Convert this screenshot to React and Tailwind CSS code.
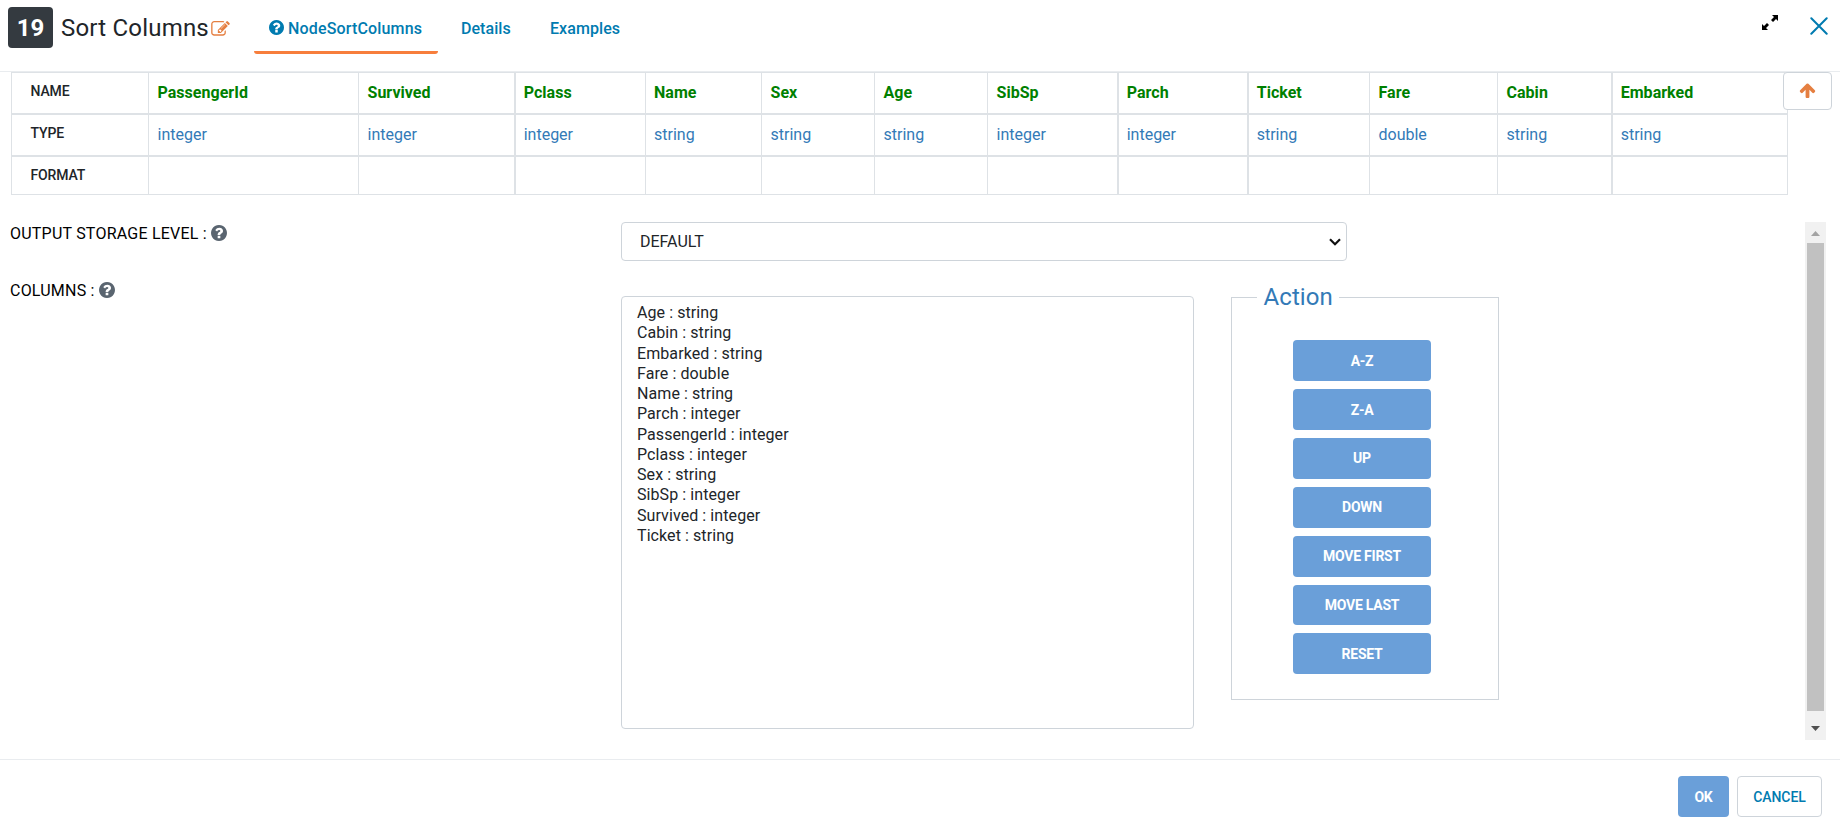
const COLS = [
  { name: 'PassengerId', type: 'integer', edge: 'border-l pl-[8.5px]' },
  { name: 'Survived', type: 'integer', edge: 'border-l pl-[8.5px]' },
  { name: 'Pclass', type: 'integer', edge: 'border-l-2 pl-[7.7px]' },
  { name: 'Name', type: 'string', edge: 'border-l pl-2' },
  { name: 'Sex', type: 'string', edge: 'border-l pl-[8.5px]' },
  { name: 'Age', type: 'string', edge: 'border-l pl-[8.5px]' },
  { name: 'SibSp', type: 'integer', edge: 'border-l pl-[8.5px]' },
  { name: 'Parch', type: 'integer', edge: 'border-l-2 pl-[7.7px]' },
  { name: 'Ticket', type: 'string', edge: 'border-l-2 pl-[7.7px]' },
  { name: 'Fare', type: 'double', edge: 'border-l pl-[8.5px]' },
  { name: 'Cabin', type: 'string', edge: 'border-l pl-[8.5px]' },
  { name: 'Embarked', type: 'string', edge: 'border-l-2 pl-[7.7px]' },
]

const OPTIONS = [
  'Age : string',
  'Cabin : string',
  'Embarked : string',
  'Fare : double',
  'Name : string',
  'Parch : integer',
  'PassengerId : integer',
  'Pclass : integer',
  'Sex : string',
  'SibSp : integer',
  'Survived : integer',
  'Ticket : string',
]

const ACTIONS = ['A-Z', 'Z-A', 'UP', 'DOWN', 'MOVE FIRST', 'MOVE LAST', 'RESET']

const GRID =
  'grid grid-cols-[137px_210px_156px_131px_116px_113px_113px_130px_130px_122px_128px_114px_177px] border-r border-[#dee2e6]'

const ROW_HEAD = 'border-l border-[#dee2e6] pt-1.5 pl-[18.5px] text-sm leading-6 font-medium tracking-[-0.15px] text-[#212529]'

function Question({ className }) {
  return (
    <svg viewBox="128 128 1536 1536" fill="currentColor" className={className}>
      <path d="M1024 1376v-192q0-14-9-23t-23-9h-192q-14 0-23 9t-9 23v192q0 14 9 23t23 9h192q14 0 23-9t9-23zm256-672q0-88-55.5-163t-138.5-116-170-41q-243 0-371 213-15 24 8 42l132 100q7 6 19 6 16 0 25-12 53-68 86-92 34-24 86-24 48 0 85.5 26t37.5 59q0 38-20 61t-68 45q-63 28-115.5 86.5t-52.5 125.5v36q0 14 9 23t23 9h192q14 0 23-9t9-23q0-19 21.5-49.5t54.5-49.5q32-18 49-28.5t46-35 44.5-48 28-60.5 12.5-81zm384 192q0 209-103 385.5t-279.5 279.5-385.5 103-385.5-103-279.5-279.5-103-385.5 103-385.5 279.5-279.5 385.5-103 385.5 103 279.5 279.5 103 385.5z" />
    </svg>
  )
}

function Header() {
  return (
    <header className="flex h-[72px] items-start border-b border-[#e9ecef] pl-2">
      <div className="mt-[7px] flex h-[41px] w-[45px] items-center justify-center rounded-[4px] bg-[#343a40] text-2xl font-bold text-white">
        19
      </div>
      <h1 className="mt-[10px] ml-2 w-[150px] text-2xl leading-9 tracking-[0.2px] whitespace-nowrap text-[#212529]">Sort Columns</h1>
      <svg viewBox="0 128 1792 1536" fill="#e57f41" className="mt-[21px] h-4 w-[19px]">
        <path d="M888 1184l116-116-152-152-116 116v56h96v96h56zm440-720q-16-16-33 1l-350 350q-17 17-1 33t33-1l350-350q17-17 1-33zm80 594v190q0 119-84.5 203.5t-203.5 84.5h-832q-119 0-203.5-84.5t-84.5-203.5v-832q0-119 84.5-203.5t203.5-84.5h832q63 0 117 25 15 7 18 23 3 17-9 29l-49 49q-14 14-32 8-23-6-45-6h-832q-66 0-113 47t-47 113v832q0 66 47 113t113 47h832q66 0 113-47t47-113v-126q0-13 9-22l64-64q15-15 35-7t20 29zm-96-738l288 288-672 672h-288v-288zm444 132l-92 92-288-288 92-92q28-28 68-28t68 28l152 152q28 28 28 68t-28 68z" />
      </svg>
      <nav className="ml-6 flex text-base leading-6 font-medium tracking-[0.16px] text-[#007bb0]">
        <a className="flex h-[54px] w-[184px] items-start rounded-[3px] border-b-3 border-[#f77e3c] pt-[17px] pl-[15px]">
          <Question className="mt-[3px] mr-1 h-[15px] w-[15px]" />
          NodeSortColumns
        </a>
        <a className="w-[112px] pt-[17px] pl-[23px] tracking-[0.05px]">Details</a>
        <a className="pt-[17px] tracking-[0.07px]">Examples</a>
      </nav>
      <svg viewBox="0 0 16 15" className="mt-[15px] ml-auto h-[15px] w-4">
        <path d="M10 0h6v6l-2-2-3 3-2-2 3-3zM0 15V9l2 2 3-3 2 2-3 3 2 2z" />
      </svg>
      <svg viewBox="0 0 18 18" stroke="#007bb0" strokeWidth="2" strokeLinecap="round" className="mt-[17px] mr-3 ml-8 h-[18px] w-[18px]">
        <path d="M1.3 1.3l15.4 15.4M16.7 1.3L1.3 16.7" />
      </svg>
    </header>
  )
}

function Schema() {
  return (
    <section className="flex h-[123px] items-start pl-[11px]">
      <div className="w-[1777px]">
        <div className={GRID + ' h-[43px] border-t border-b-2'}>
          <div className={ROW_HEAD}>NAME</div>
          {COLS.map((c) => (
            <div key={c.name} className={c.edge + ' border-[#dee2e6] pt-2'}>
              <div className="text-base leading-6 font-bold tracking-[0.03px] text-[#008000]">{c.name}</div>
            </div>
          ))}
        </div>
        <div className={GRID + ' h-[42px] border-b-2'}>
          <div className={ROW_HEAD}>TYPE</div>
          {COLS.map((c) => (
            <div key={c.name} className={c.edge + ' border-[#dee2e6] pt-2'}>
              <div className="text-base leading-6 text-[#337ab7]">{c.type}</div>
            </div>
          ))}
        </div>
        <div className={GRID + ' h-[38px] border-b'}>
          <div className={ROW_HEAD}>FORMAT</div>
          {COLS.map((c) => (
            <div key={c.name} className={c.edge + ' border-[#dee2e6]'} />
          ))}
        </div>
      </div>
      <button className="relative -ml-[5px] flex h-[38px] w-[49px] items-start justify-center rounded-[4px] border border-[#ced4da] bg-white pt-[9px]">
        <svg viewBox="89 53 1614 1611" fill="#e57f41" className="h-4 w-[17px]">
          <path d="M1675 971q0 51-37 90l-75 75q-38 38-91 38-54 0-90-38l-294-293v704q0 52-37.5 84.5t-90.5 32.5h-128q-53 0-90.5-32.5t-37.5-84.5v-704l-294 293q-36 38-90 38t-90-38l-75-75q-38-38-38-90 0-53 38-91l651-651q35-37 90-37 54 0 91 37l651 651q37 39 37 91z" />
        </svg>
      </button>
    </section>
  )
}

function Scrollbar() {
  return (
    <div className="mr-[14px] ml-auto flex h-[518px] w-[21px] flex-col items-center bg-[#f1f1f1]">
      <div className="flex h-[21px] items-center pt-[2px]">
        <svg viewBox="0 0 9 5" className="h-[5px] w-[9px]" fill="#a3a3a3"><path d="M4.5 0L9 5H0z" /></svg>
      </div>
      <div className="h-[468px] w-[17px] bg-[#c1c1c1]" />
      <div className="flex h-[29px] items-center pt-[6px]">
        <svg viewBox="0 0 9 5" className="h-[5px] w-[9px]" fill="#505050"><path d="M0 0h9L4.5 5z" /></svg>
      </div>
    </div>
  )
}

function Label({ children }) {
  return (
    <div className="flex items-start text-base leading-6 tracking-[0.22px] text-black">
      {children}
      <Question className="mt-[3px] ml-1 h-4 w-4 text-[#5a6570]" />
    </div>
  )
}

export default function App() {
  return (
    <div className="flex h-[826px] w-[1840px] flex-col overflow-hidden bg-white font-['Roboto',sans-serif]">
      <Header />
      <Schema />
      <main className="flex h-[565px] items-start border-b border-[#e9ecef] pt-[27px] pl-[10px]">
        <div className="w-[611px]">
          <div className="h-[57px]"><Label>OUTPUT STORAGE LEVEL :</Label></div>
          <Label>COLUMNS :</Label>
        </div>
        <div>
          <div className="flex h-[39px] w-[726px] items-center justify-between rounded-[4px] border border-[#ced4da] pr-[5px] pl-[18px] text-base text-[#212529]">
            DEFAULT
            <svg viewBox="0 0 12 8" fill="none" stroke="#111" strokeWidth="2.2" className="h-2 w-3">
              <path d="M1 1.2l5 5 5-5" />
            </svg>
          </div>
          <div className="mt-[35px] flex items-start">
            <ul className="h-[433px] w-[573px] rounded-[4px] border border-[#ced4da] pt-[6px] pl-[15px] text-base leading-[20.25px] tracking-[0.08px] text-[#212529]">
              {OPTIONS.map((o) => (
                <li key={o}>{o}</li>
              ))}
            </ul>
            <fieldset className="-mt-[14px] ml-[37px] h-[418px] w-[268px] border border-[#ced4da] pl-[25px]">
              <legend className="h-[30px] px-[6.5px] text-2xl leading-[30px] tracking-[0.1px] text-[#337ab7]">Action</legend>
              <div className="ml-[36px] flex w-[138px] flex-col gap-2 pt-[28.3px]">
                {ACTIONS.map((a) => (
                  <button key={a} className="h-[40.85px] rounded-[4px] bg-[#6a9fd9] text-sm font-bold tracking-[-0.25px] text-white">
                    {a}
                  </button>
                ))}
              </div>
            </fieldset>
          </div>
        </div>
        <Scrollbar />
      </main>
      <footer className="flex justify-end gap-2 pt-4 pr-[18px] text-sm">
        <button className="h-[41px] w-[51px] rounded-[4px] bg-[#6a9fd9] font-bold tracking-[-0.2px] text-white">OK</button>
        <button className="h-[41px] w-[85px] rounded-[4px] border border-[#ced4da] font-medium tracking-[-0.1px] text-[#007bb0]">CANCEL</button>
      </footer>
    </div>
  )
}
